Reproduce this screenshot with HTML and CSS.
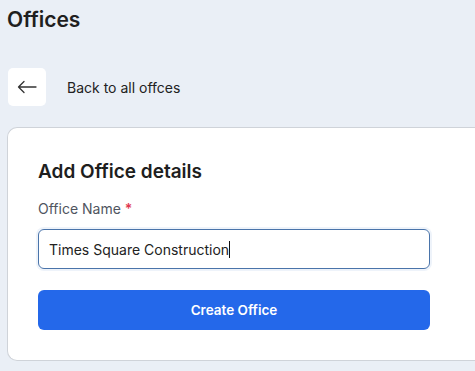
FILE: index.html
```html
<!DOCTYPE html>
<html lang="en">
<head>
    <meta charset="UTF-8">
    <meta name="viewport" content="width=device-width, initial-scale=1.0">
    <title>Offices</title>
    <link rel="stylesheet" href="styles.css">
</head>
<body>
    <h1 class="page-title">Offices</h1>

    <div class="back-row">
        <a class="back-btn" href="#">
            <svg width="20" height="14" viewBox="0 0 20 14" fill="none" stroke="#333" stroke-width="1.3" stroke-linecap="round" stroke-linejoin="round">
                <path d="M19 7H1.5M7 1.5L1.5 7L7 12.5"/>
            </svg>
        </a>
        <span class="back-text">Back to all offces</span>
    </div>

    <div class="card">
        <h2 class="card-title">Add Office details</h2>
        <label class="field-label" for="officeName">Office Name <span class="req">*</span></label>
        <div class="input-box">
            <span class="input-value">Times Square Construction</span><span class="caret"></span>
        </div>
        <button class="create-btn">Create Office</button>
    </div>
</body>
</html>
```

FILE: styles.css
```css
body {
    margin: 0;
    background: #eaeff6;
    font-family: 'Inter', sans-serif;
    color: #222;
    overflow: hidden;
}

.page-title {
    margin: 0;
    padding: 8px 0 0 7px;
    font-size: 21px;
    font-weight: 600;
    line-height: 24px;
    color: #1f1f1f;
}

.back-row {
    display: flex;
    align-items: center;
    margin: 36px 0 0 8px;
}

.back-btn {
    width: 38px;
    height: 38px;
    background: #fff;
    border-radius: 5px;
    display: flex;
    align-items: center;
    justify-content: center;
}

.back-text {
    margin-left: 21px;
    font-size: 14px;
    color: #222;
}

/* card runs off the right edge in the screenshot, so no right border */
.card {
    margin: 21px 0 0 7px;
    background: #fff;
    border: 1px solid #cfd3d9;
    border-right: none;
    border-radius: 10px 0 0 10px;
    padding: 32px 0 30px 30px;
}

.card-title {
    margin: 0;
    font-size: 19px;
    font-weight: 600;
    line-height: 24px;
    color: #1e1e1e;
}

.field-label {
    display: block;
    margin-top: 16px;
    font-size: 14px;
    line-height: 18px;
    color: #4f5560;
}

.req {
    color: #e0384f;
    font-weight: 600;
}

.input-box {
    margin-top: 11px;
    width: 392px;
    height: 40px;
    box-sizing: border-box;
    border: 1px solid #4a74aa;
    border-radius: 6px;
    box-shadow: 0 0 0 2px #eef3fa;
    display: flex;
    align-items: center;
    padding-left: 10px;
}

.input-value {
    font-size: 14px;
    color: #222;
}

.caret {
    width: 1px;
    height: 17px;
    background: #111;
}

.create-btn {
    display: block;
    margin-top: 21px;
    width: 392px;
    height: 40px;
    border: none;
    border-radius: 6px;
    background: #2468ea;
    color: #fff;
    font-family: 'Inter', sans-serif;
    font-size: 13.5px;
    font-weight: 600;
    cursor: pointer;
}
```
